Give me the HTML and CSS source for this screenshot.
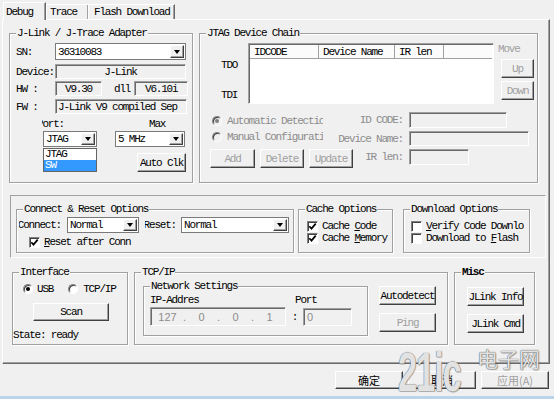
FILE: index.html
```html
<!DOCTYPE html>
<html>
<head>
<meta charset="utf-8">
<link rel="stylesheet" href="styles.css">
</head>
<body>
<div class="tabs">
  <div class="tab sel t-debug">Debug</div>
  <div class="tab t-trace">Trace</div>
  <div class="tab t-flash">Flash Download</div>
</div>
<div class="panel">
  <div class="row1">
    <div class="group g-jlink">
      <span class="gt">J-Link / J-Trace Adapter</span>
      <div class="frow"><span class="lbl">SN:</span><div class="combo c-sn"><span class="ctext">36310083</span><span class="dd"><i></i></span></div></div>
      <div class="frow r-dev"><span class="lbl">Device:</span><div class="field f-dev">J-Link</div></div>
      <div class="frow r-hw"><span class="lbl">HW :</span><div class="field f-hw">V9.30</div><span class="dll">dll</span><div class="field f-dll">V6.10i</div></div>
      <div class="frow r-fw"><span class="lbl">FW :</span><div class="field f-fw">J-Link V9 compiled Sep</div></div>
      <div class="portlbls"><span class="clip clip-port"><span>Port:</span></span><span class="maxlbl">Max</span></div>
      <div class="combos">
        <div class="combo c-port"><span class="ctext">JTAG</span><span class="dd"><i></i></span>
          <div class="droplist"><div class="dl-item">JTAG</div><div class="dl-item dl-sel">SW</div></div>
        </div>
        <div class="combo c-max"><span class="ctext">5 MHz</span><span class="dd"><i></i></span></div>
      </div>
      <div class="btn b-autoclk">Auto Clk</div>
    </div>
    <div class="group g-chain">
      <span class="gt">JTAG Device Chain</span>
      <div class="chain-top">
        <div class="tdcol"><div>TDO</div><div class="tdi">TDI</div></div>
        <div class="table">
          <div class="thead">
            <div class="th th1">IDCODE</div>
            <div class="th th2">Device Name</div>
            <div class="th th3">IR len</div>
            <div class="th th4"></div>
          </div>
        </div>
        <div class="movecol">
          <div class="dis">Move</div>
          <div class="btn dis b-up">Up</div>
          <div class="btn dis b-down">Down</div>
        </div>
      </div>
      <div class="chain-bot">
        <div class="cb-left">
          <div class="rrow"><span class="radio dis-r on"></span><span class="rtext">Automatic Detection</span></div>
          <div class="rrow"><span class="radio dis-r"></span><span class="rtext">Manual Configuration</span></div>
          <div class="cbtns">
            <div class="btn dis b-add">Add</div>
            <div class="btn dis b-del">Delete</div>
            <div class="btn dis b-upd">Update</div>
          </div>
        </div>
        <div class="cb-right">
          <span class="glbl">ID CODE:</span><div class="field f-id"></div>
          <span class="glbl">Device Name:</span><div class="field f-dn"></div>
          <span class="glbl">IR len:</span><div class="field f-ir"></div>
        </div>
      </div>
    </div>
  </div>

  <div class="frame">
    <div class="group g-conn">
      <span class="gt">Connect &amp; Reset Options</span>
      <div class="conn-row">
        <span class="clip clip-conn"><span>Connect:</span></span>
        <div class="combo c-conn"><span class="ctext">Normal</span><span class="dd"><i></i></span></div>
        <span class="clip clip-reset"><span>Reset:</span></span>
        <div class="combo c-reset"><span class="ctext">Normal</span><span class="dd"><i></i></span></div>
      </div>
      <div class="crow r-rac"><span class="chk"><svg width="9" height="9" viewBox="0 0 9 9"><path d="M1.3 4.2l2.2 2.4 4.2-5" fill="none" stroke="#000" stroke-width="1.7"/></svg></span><span><u>R</u>eset after Conn</span></div>
    </div>
    <div class="group g-cache">
      <span class="gt">Cache Options</span>
      <div class="crow"><span class="chk"><svg width="9" height="9" viewBox="0 0 9 9"><path d="M1.3 4.2l2.2 2.4 4.2-5" fill="none" stroke="#000" stroke-width="1.7"/></svg></span><span>Cache <u>C</u>ode</span></div>
      <div class="crow"><span class="chk"><svg width="9" height="9" viewBox="0 0 9 9"><path d="M1.3 4.2l2.2 2.4 4.2-5" fill="none" stroke="#000" stroke-width="1.7"/></svg></span><span>Cache <u>M</u>emory</span></div>
    </div>
    <div class="group g-dl">
      <span class="gt">Download Options</span>
      <div class="crow"><span class="chk"></span><span class="cl-clip"><u>V</u>erify Code Download</span></div>
      <div class="crow"><span class="chk"></span><span>Download to <u>F</u>lash</span></div>
    </div>
  </div>

  <div class="row3">
    <div class="group g-if">
      <span class="gt">Interface</span>
      <div class="ifrow"><span class="radio on"></span><span>USB</span><span class="radio r-tcp"></span><span>TCP/IP</span></div>
      <div class="btn b-scan">Scan</div>
      <div class="state">State: ready</div>
    </div>
    <div class="group g-tcp">
      <span class="gt">TCP/IP</span>
      <div class="group g-net">
        <span class="gt">Network Settings</span>
        <div class="netgrid">
          <span class="ip-lbl">IP-Addres</span>
          <span class="port-lbl">Port</span>
          <div class="field ipfield"><span class="seg">127</span><span class="dot">.</span><span class="seg">0</span><span class="dot">.</span><span class="seg">0</span><span class="dot">.</span><span class="seg">1</span></div>
          <span class="colon">:</span>
          <div class="field portfield">0</div>
        </div>
      </div>
      <div class="tcpbtns">
        <div class="btn b-side">Autodetect</div>
        <div class="btn dis b-side">Ping</div>
      </div>
    </div>
    <div class="group g-misc">
      <span class="gt gt-bold">Misc</span>
      <div class="btn b-side">JLink Info</div>
      <div class="btn b-side">JLink Cmd</div>
    </div>
  </div>
</div>

<div class="bottom">
  <div class="btn b-dlg cjk">确定</div>
  <div class="btn b-dlg cjk">取消</div>
  <div class="btn dis b-dlg cjk">应用(A)</div>
</div>
<div class="winedge"></div>

<div class="wm wm-21">21ic</div>
<div class="wm wm-cn">电子网</div>
</body>
</html>
```
FILE: styles.css
```css
* { box-sizing: border-box; }
html, body { margin: 0; }
body {
  width: 554px; height: 399px; overflow: hidden; position: relative;
  background: #f0f0f0; color: #000;
  font: 11px/12px "Liberation Mono", "DejaVu Sans Mono", monospace;
  letter-spacing: -1.2px;
}

/* tabs */
.tabs { display: flex; align-items: flex-end; height: 19px; padding-left: 3px; position: relative; z-index: 1; }
.tab {
  height: 15px; padding: 1px 0 0 3px; white-space: nowrap;
  border: 1px solid; border-bottom: 0; border-color: #fff #696969 transparent #fff;
  box-shadow: inset -1px 0 #a0a0a0;
}
.tab.sel { height: 18px; margin-bottom: -1px; background: #f0f0f0; padding: 3px 0 0 2px; }
.t-debug { width: 43px; }
.t-trace { width: 43px; }
.t-flash { width: 87px; margin-left: -1px; padding-left: 5px; }

.panel {
  margin-left: 2px; width: 548px; height: 345px;
  border: 1px solid; border-color: #fff #696969 #696969 #fff;
  box-shadow: inset -1px -1px #a0a0a0;
  padding: 7px 0 0 6px;
}

/* group box */
.group { position: relative; margin-top: 6px; border: 1px solid #a0a0a0; box-shadow: inset 1px 1px #fff, 1px 1px #fff; flex: none; }
.gt { position: absolute; top: -7px; left: 6px; padding: 0 1px; background: #f0f0f0; white-space: nowrap; line-height: 12px; }
.gt-bold { font-weight: bold; }

/* controls */
.btn {
  display: flex; align-items: center; justify-content: center; white-space: nowrap; flex: none;
  background: #f0f0f0; border: 1px solid; border-color: #fff #404040 #404040 #fff;
  box-shadow: inset -1px -1px #a0a0a0;
}
.dis { color: #a0a0a0; }

.combo {
  position: relative; display: flex; align-items: stretch; flex: none;
  background: #fff; border: 1px solid #7a7a7a; padding: 1px 1px 1px 2px;
}
.ctext { flex: 1; display: flex; align-items: center; overflow: hidden; white-space: nowrap; }
.dd {
  width: 14px; flex: none; display: flex; align-items: center; justify-content: center;
  background: #f0f0f0; border: 1px solid; border-color: #fff #404040 #404040 #fff;
  box-shadow: inset -1px -1px #a0a0a0;
}
.dd i { display: block; width: 0; height: 0; border-style: solid; border-width: 4px 3.5px 0; border-color: #000 transparent transparent; }

.field {
  display: flex; align-items: center; padding-left: 2px; white-space: nowrap; overflow: hidden; flex: none;
  border: 1px solid; border-color: #a0a0a0 #fff #fff #a0a0a0;
  box-shadow: inset 1px 1px #696969;
}

.clip { display: flex; justify-content: flex-end; overflow: hidden; white-space: nowrap; flex: none; }

.radio {
  position: relative; width: 10px; height: 10px; border-radius: 50%; flex: none;
  background: #fff; border: 1px solid; border-color: #808080 #fff #fff #808080;
  box-shadow: inset 1px 1px #404040;
}
.radio.on::after { content: ""; position: absolute; left: 2px; top: 2px; width: 4px; height: 4px; border-radius: 50%; background: #000; }
.radio.dis-r { background: #f0f0f0; }
.radio.dis-r.on::after { background: #808080; }

.chk {
  width: 11px; height: 11px; flex: none; display: flex; align-items: center; justify-content: center;
  background: #fff; border: 1px solid; border-color: #808080 #fff #fff #808080;
  box-shadow: inset 1px 1px #404040;
}
.crow { display: flex; align-items: center; height: 12px; white-space: nowrap; }
.crow .chk { margin-right: 4px; }

/* J-Link group */
.row1 { display: flex; gap: 6px; }
.g-jlink { width: 184px; height: 150px; padding: 9px 0 0 6px; }
.frow { display: flex; align-items: center; }
.lbl { width: 39px; flex: none; white-space: nowrap; }
.c-sn { width: 131px; height: 17px; }
.r-dev { margin-top: 4px; }
.f-dev { width: 131px; height: 15px; justify-content: center; padding: 0; background: #f0f0f0; }
.r-hw { margin-top: 2px; }
.f-hw { width: 47px; height: 15px; justify-content: center; padding: 0; }
.dll { margin: 0 4px 0 12px; }
.f-dll { width: 54px; height: 15px; justify-content: center; padding: 0; }
.r-fw { margin-top: 3px; }
.f-fw { width: 132px; height: 15px; }
.portlbls { display: flex; height: 12px; margin-top: 4px; }
.clip-port { margin-left: 26px; width: 22px; }
.maxlbl { margin-left: 85px; }
.combos { display: flex; margin-top: 1px; }
.c-port { margin-left: 27px; width: 54px; height: 16px; }
.c-max { margin-left: 18px; width: 70px; height: 16px; }
.droplist {
  position: absolute; left: -1px; top: 16px; width: 54px; z-index: 2;
  background: #fff; border: 1px solid #646464; padding: 0;
}
.dl-item { height: 11px; line-height: 11px; padding-left: 1px; }
.dl-sel { background: #3399ff; color: #fff; }
.b-autoclk { margin: 6px 0 0 121px; width: 49px; height: 19px; }

/* JTAG device chain */
.g-chain { width: 339px; height: 150px; padding-top: 9px; }
.chain-top { display: flex; }
.tdcol { width: 48px; flex: none; padding: 16px 0 0 21px; }
.tdi { margin-top: 18px; }
.table {
  width: 246px; height: 61px; flex: none; background: #fff; padding: 1px 1px 0 1px;
  border: 1px solid; border-color: #a0a0a0 #fff #fff #a0a0a0; box-shadow: inset 1px 1px #696969;
}
.thead { display: flex; height: 14px; margin-top: 0; }
.th {
  padding: 1px 0 0 4px; white-space: nowrap; background: #fbfbfb; flex: none;
  border-right: 1px solid #a0a0a0; border-bottom: 1px solid #a0a0a0;
}
.th1 { width: 69px; }
.th2 { width: 76px; }
.th3 { width: 49px; }
.th4 { flex: 1; border-right: 0; }
.movecol { margin-left: 4px; padding-top: 0; }
.b-up { margin: 4px 0 0 3px; width: 33px; height: 19px; }
.b-down { margin: 3px 0 0 3px; width: 33px; height: 19px; }

.chain-bot { display: flex; margin-top: 7px; }
.cb-left { width: 130px; flex: none; padding: 2px 0 0 10px; }
.rrow { display: flex; align-items: center; height: 16px; }
.rrow .radio { margin: 0 5px 0 2px; }
.rtext { width: 96px; overflow: hidden; white-space: nowrap; color: #8c8c8c; }
.cbtns { display: flex; gap: 5px; margin-top: 4px; }
.b-add { width: 45px; height: 19px; }
.b-del { width: 44px; height: 19px; }
.b-upd { width: 44px; height: 19px; }
.cb-right {
  display: grid; grid-template-columns: 76px auto; grid-template-rows: 16px 15px 16px;
  column-gap: 3px; row-gap: 3px; align-items: center; margin-top: 1px;
}
.glbl { text-align: right; padding-right: 3px; color: #8c8c8c; white-space: nowrap; }
.f-id { width: 98px; height: 16px; }
.f-dn { width: 120px; height: 15px; }
.f-ir { width: 60px; height: 16px; }

/* middle frame */
.frame {
  display: flex; align-items: flex-start; margin: 12px 0 0 1px; width: 536px; height: 63px;
  border: 1px solid; border-color: #a0a0a0 #fff #fff #a0a0a0; padding: 7px 0 0 5px;
}
.g-conn { width: 278px; height: 44px; padding: 7px 0 0 0; }
.conn-row { display: flex; align-items: center; }
.clip-conn { margin-left: 2px; width: 42px; }
.c-conn { margin-left: 6px; width: 72px; height: 16px; }
.clip-reset { margin-left: 6px; width: 31px; }
.c-reset { margin-left: 5px; width: 108px; height: 16px; }
.r-rac { margin: 3px 0 0 12px; }
.g-cache { margin-left: 4px; width: 95px; height: 44px; padding: 10px 0 0 8px; }
.g-dl { margin-left: 10px; width: 127px; height: 44px; padding: 10px 0 0 7px; }
.cl-clip { width: 98px; overflow: hidden; }

/* bottom row of panel */
.row3 { display: flex; align-items: flex-start; margin: 8px 0 0 3px; }
.g-if { width: 116px; height: 73px; padding-top: 10px; }
.ifrow { display: flex; align-items: center; height: 12px; margin-left: 10px; }
.ifrow .radio { margin-right: 4px; }
.ifrow .r-tcp { margin-left: 15px; margin-right: 5px; }
.b-scan { margin: 8px 0 0 20px; width: 76px; height: 18px; }
.state { margin-top: 8px; white-space: nowrap; }

.g-tcp { margin-left: 6px; width: 314px; height: 73px; padding: 7px 0 0 8px; display: flex; align-items: flex-start; }
.g-net { width: 225px; height: 50px; padding: 7px 0 0 6px; }
.netgrid { display: grid; grid-template-columns: 136px 17px 49px; grid-template-rows: 12px 19px; row-gap: 1px; align-items: center; }
.port-lbl { grid-column: 2 / 4; padding-left: 9px; }
.ipfield { width: 136px; height: 19px; padding: 0 0 0 1px; font-family: "Liberation Sans", Arial, sans-serif; letter-spacing: 0; color: #8c8c8c; }
.seg { width: 31px; text-align: center; flex: none; }
.dot { width: 3px; text-align: center; flex: none; }
.colon { text-align: center; }
.portfield { width: 49px; height: 18px; padding-left: 3px; font-family: "Liberation Sans", Arial, sans-serif; letter-spacing: 0; color: #8c8c8c; }
.tcpbtns { display: flex; flex-direction: column; gap: 8px; margin-left: 11px; padding-top: 6px; }
.b-side { width: 57px; height: 19px; }

.g-misc { margin-left: 6px; width: 81px; height: 73px; padding: 14px 0 0 12px; display: flex; flex-direction: column; gap: 8px; }

/* dialog buttons */
.bottom { display: flex; gap: 5px; margin: 7px 0 0 335px; }
.b-dlg { width: 68px; height: 18px; }
.cjk { font-family: "Noto Sans CJK SC", sans-serif; font-size: 11px; letter-spacing: 0; }
.winedge { height: 3px; margin-top: 7px; background: #bcd3ec; }

/* watermark overlay */
.wm { position: absolute; white-space: nowrap; color: rgba(255,255,255,0.82); letter-spacing: 0; pointer-events: none;
  text-shadow: 0 0 1px #666, 0 0 1px #666, 1px 1px 1px rgba(0,0,0,0.25); }
.wm-21 { left: 398px; top: 344px; font: bold 56px/56px "Liberation Sans", sans-serif; letter-spacing: -2px; transform: scaleX(0.62); transform-origin: left top; }
.wm-cn { left: 477px; top: 346px; font: 21px/24px "Noto Sans CJK SC", sans-serif; }
```
